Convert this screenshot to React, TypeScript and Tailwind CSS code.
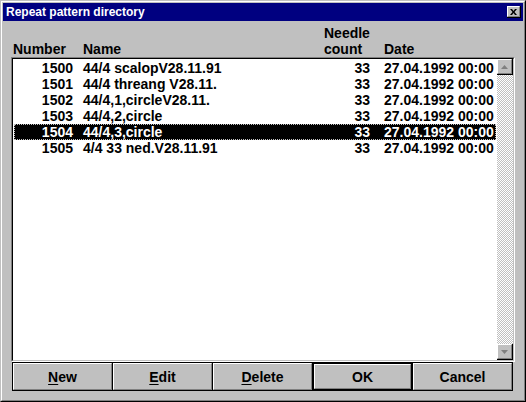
import React from "react";

const rows: [string, string, string, string][] = [
  ["1500", "44/4 scalopV28.11.91", "33", "27.04.1992 00:00"],
  ["1501", "44/4 threang V28.11.", "33", "27.04.1992 00:00"],
  ["1502", "44/4,1,circleV28.11.", "33", "27.04.1992 00:00"],
  ["1503", "44/4,2,circle", "33", "27.04.1992 00:00"],
  ["1504", "44/4,3,circle", "33", "27.04.1992 00:00"],
  ["1505", "4/4 33 ned.V28.11.91", "33", "27.04.1992 00:00"],
];

function Arrow({ up }: { up: boolean }) {
  return (
    <svg width="7" height="4" viewBox="0 0 7 4" className="block">
      {up ? (
        <polygon points="3.5,0 7,4 0,4" fill="#808080" />
      ) : (
        <polygon points="0,0 7,0 3.5,4" fill="#808080" />
      )}
    </svg>
  );
}

function ScrollBtn({ up }: { up: boolean }) {
  return (
    <div className="h-[16px] w-[16px] border-r border-b border-black">
      <div className="h-full w-full border-t border-l border-white border-r border-b border-r-[#808080] border-b-[#808080] bg-[#c0c0c0] flex items-center justify-center">
        <Arrow up={up} />
      </div>
    </div>
  );
}

function Button({ label, u, def }: { label: string; u?: boolean; def?: boolean }) {
  return (
    <div
      className={
        "w-[101px] h-[29px] -ml-px first:ml-0 bg-black " + (def ? "p-[2px]" : "p-px")
      }
    >
      <div className="h-full w-full bg-[#c0c0c0] border-t border-l border-white border-b border-r border-b-[#808080] border-r-[#808080] flex items-center justify-center text-[14px] font-bold text-black leading-none">
        {u ? (
          <span>
            <span className="underline underline-offset-[2px]">{label[0]}</span>
            {label.slice(1)}
          </span>
        ) : (
          <span>{label}</span>
        )}
      </div>
    </div>
  );
}

export default function App() {
  return (
    <div className="w-[526px] h-[402px] font-['Liberation_Sans',Arial,sans-serif] select-none">
      <div className="w-full h-full border-t border-l border-t-[#c0c0c0] border-l-[#c0c0c0] border-b border-r border-b-black border-r-black">
        <div className="w-full h-full border-t border-l border-white border-b border-r border-b-[#808080] border-r-[#808080] bg-[#c0c0c0] p-px flex flex-col">
          {/* Title bar */}
          <div className="h-[18px] bg-[#000080] flex items-center justify-between pl-[3px] pr-[2px]">
            <span className="text-white text-[12px] font-bold leading-none">Repeat pattern directory</span>
            <div className="w-[14px] h-[12px] bg-black">
              <div className="w-[13px] h-[11px] bg-[#c0c0c0] border-t border-l border-white border-r border-b border-r-[#808080] border-b-[#808080] flex items-center justify-center">
                <svg width="7" height="6" viewBox="0 0 7 6" className="block">
                  <path d="M0 0h2l1.5 2 1.5-2h2l-2.5 3 2.5 3h-2l-1.5-2-1.5 2h-2l2.5-3z" fill="#000" />
                </svg>
              </div>
            </div>
          </div>

          {/* Header */}
          <div className="pt-[4px] pl-[10px] text-[14px] font-bold text-black leading-none">
            <div className="flex h-[16px] items-center">
              <div className="w-[311px]" />
              <div>Needle</div>
            </div>
            <div className="flex h-[16px] items-center">
              <div className="w-[70px]">Number</div>
              <div className="w-[241px]">Name</div>
              <div className="w-[60px]">count</div>
              <div>Date</div>
            </div>
          </div>

          {/* List */}
          <div className="ml-[8px] w-[504px] h-[305px] border-t border-l border-t-[#808080] border-l-[#808080] border-b border-r border-white">
            <div className="w-full h-full border-t border-l border-black border-b border-r border-b-[#c0c0c0] border-r-[#c0c0c0] bg-white flex">
              <div className="flex-1 pt-px px-px">
                {rows.map((r, i) => {
                  const sel = i === 4;
                  return (
                    <div
                      key={r[0]}
                      className={
                        "flex h-[16px] items-center text-[14px] font-bold leading-none " +
                        (sel
                          ? "bg-black text-white outline-1 outline-dotted outline-[#c0c0c0] -outline-offset-1"
                          : "text-black")
                      }
                    >
                      <div className="w-[59px] text-right">{r[0]}</div>
                      <div className="w-[10px]" />
                      <div className="w-[241px] whitespace-nowrap">{r[1]}</div>
                      <div className="w-[46px] text-right">{r[2]}</div>
                      <div className="w-[14px]" />
                      <div className="whitespace-nowrap">{r[3]}</div>
                    </div>
                  );
                })}
              </div>
              <div className="w-[16px] flex flex-col">
                <ScrollBtn up />
                <div className="flex-1 bg-[repeating-conic-gradient(#c0c0c0_0_25%,#ffffff_0_50%)] bg-[length:2px_2px]" />
                <ScrollBtn up={false} />
              </div>
            </div>
          </div>

          {/* Buttons */}
          <div className="ml-[9px] flex">
            <Button label="New" u />
            <Button label="Edit" u />
            <Button label="Delete" u />
            <Button label="OK" def />
            <Button label="Cancel" />
          </div>
        </div>
      </div>
    </div>
  );
}
